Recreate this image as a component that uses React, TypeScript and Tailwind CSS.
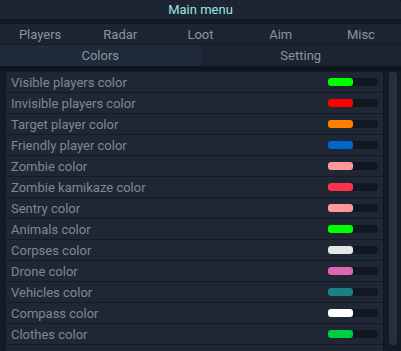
import React from "react";

const rows: { label: string; color: string }[] = [
  { label: "Visible players color", color: "#00ff00" },
  { label: "Invisible players color", color: "#ff0000" },
  { label: "Target player color", color: "#ff8000" },
  { label: "Friendly player color", color: "#0066cc" },
  { label: "Zombie color", color: "#ff9999" },
  { label: "Zombie kamikaze color", color: "#ff334d" },
  { label: "Sentry color", color: "#ff9999" },
  { label: "Animals color", color: "#00ff00" },
  { label: "Corpses color", color: "#e6e6e6" },
  { label: "Drone color", color: "#e066b3" },
  { label: "Vehicles color", color: "#1a8080" },
  { label: "Compass color", color: "#ffffff" },
  { label: "Clothes color", color: "#00cc44" },
];

const tabs = ["Players", "Radar", "Loot", "Aim", "Misc"];

export default function App() {
  return (
    <div
      className="w-[401px] h-[351px] overflow-hidden bg-[#121921] flex flex-col text-[13px] leading-none"
      style={{ fontFamily: "Roboto, 'Liberation Sans', sans-serif" }}
    >
      <div className="h-[19px] shrink-0 bg-[#1c2531] rounded-t-[3px] flex items-center justify-center text-[#9fe3e3]">
        Main menu
      </div>
      <div className="h-[5px] shrink-0" />
      <div className="h-[20px] shrink-0 grid grid-cols-5 bg-[#1b2430] text-[#8c949c]">
        {tabs.map((t) => (
          <div key={t} className="flex items-center justify-center">
            {t}
          </div>
        ))}
      </div>
      <div className="h-px shrink-0 bg-[#151c25]" />
      <div className="h-[21px] shrink-0 grid grid-cols-2 text-[#8c949c]">
        <div className="flex items-center justify-center bg-[#1f2b3a]">Colors</div>
        <div className="flex items-center justify-center bg-[#1b2430]">Setting</div>
      </div>
      <div className="h-[5px] shrink-0 bg-[#0f151c]" />
      <div className="flex flex-1 min-h-0 bg-[#141b24]">
        <div className="w-[383px] pl-[6px] pt-px flex flex-col gap-px overflow-hidden">
          {rows.map((r) => (
            <div
              key={r.label}
              className="h-[20px] shrink-0 bg-[#1e2733] flex items-center pl-[5px] pr-[5px] text-[#80888f]"
            >
              <span className="flex-1">{r.label}</span>
              <div className="w-[50px] h-[8px] rounded-[3px] bg-[#111821] flex">
                <div
                  className="w-[25px] h-[8px] rounded-[3px]"
                  style={{ backgroundColor: r.color }}
                />
              </div>
            </div>
          ))}
          <div className="h-[20px] shrink-0 bg-[#1e2733]" />
        </div>
        <div className="flex-1 flex justify-center pt-px pb-[6px] border-l border-[#10161e]">
          <div className="w-[8px] h-full rounded-[3px] bg-[#27313d]" />
        </div>
      </div>
    </div>
  );
}
